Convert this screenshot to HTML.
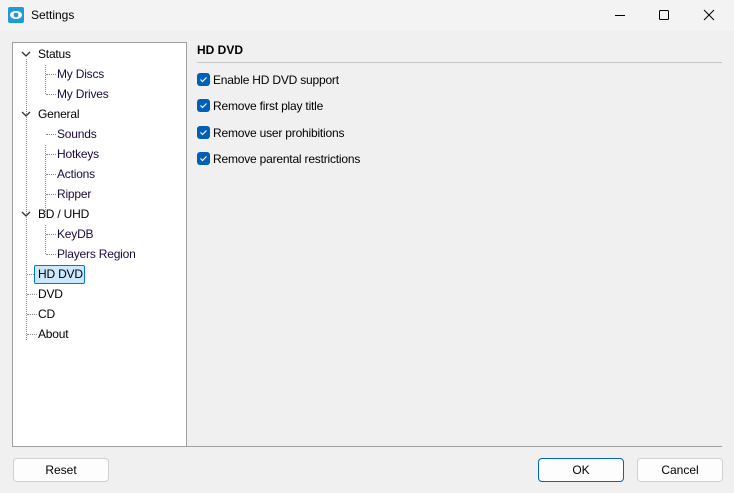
<!DOCTYPE html><html><head><style>
body{margin:0;width:734px;height:493px;background:#f0f0f0;font-family:"Liberation Sans",sans-serif;font-size:12px;color:#000;position:relative;overflow:hidden}
.a{position:absolute}
.title{left:0;top:0;width:734px;height:31px;background:#f3f3f3}
.tree{left:12px;top:42px;width:173px;height:403px;background:#fff;border:1px solid #a0a0a0}
.r{position:absolute;white-space:nowrap;line-height:16px;letter-spacing:-0.2px}
.dv{position:absolute;border-left:1px dotted #888}
.dh{position:absolute;border-top:1px dotted #888}
.btn{position:absolute;height:22px;border:1px solid #d0d0d0;border-radius:4px;background:#fdfdfd;text-align:center;line-height:22px}
.cb{position:absolute;left:197px;width:13px;height:13px;background:#005fb8;border-radius:3px}
.cl{position:absolute;left:213px;line-height:16px;letter-spacing:-0.2px}
</style></head><body>
<div class="a title"></div>
<svg class="a" style="left:8px;top:7px" width="16" height="16"><rect width="16" height="16" rx="2" fill="#1e9bd7"/><ellipse cx="8" cy="8" rx="6" ry="4" fill="#fff"/><circle cx="8" cy="8" r="2.4" fill="#1e9bd7"/></svg>
<div class="a" style="left:31px;top:8px;font-size:12px">Settings</div>
<svg class="a" style="left:600px;top:0" width="134" height="31" fill="none" stroke="#000" stroke-width="1"><path d="M15 15.5h10"/><rect x="59.5" y="10.5" width="9" height="9" rx="1"/><path d="M104 10l10 10M114 10l-10 10"/></svg>
<div class="a tree">
<div class="dv" style="left:13px;top:16px;height:281px"></div>
<div class="dv" style="left:32px;top:22px;height:29px"></div>
<div class="dv" style="left:32px;top:102px;height:69px"></div>
<div class="dv" style="left:32px;top:182px;height:29px"></div>
<div class="dh" style="left:33px;top:31px;width:10px"></div>
<div class="dh" style="left:33px;top:51px;width:10px"></div>
<div class="dh" style="left:33px;top:91px;width:10px"></div>
<div class="dh" style="left:33px;top:111px;width:10px"></div>
<div class="dh" style="left:33px;top:131px;width:10px"></div>
<div class="dh" style="left:33px;top:151px;width:10px"></div>
<div class="dh" style="left:33px;top:191px;width:10px"></div>
<div class="dh" style="left:33px;top:211px;width:10px"></div>
<div class="dh" style="left:14px;top:231px;width:7px"></div>
<div class="dh" style="left:14px;top:251px;width:10px"></div>
<div class="dh" style="left:14px;top:271px;width:10px"></div>
<div class="dh" style="left:14px;top:291px;width:10px"></div>
<svg class="a" style="left:8px;top:7px" width="10" height="8" fill="none" stroke="#333" stroke-width="1.3"><path d="M1 2l4 4 4-4"/></svg>
<svg class="a" style="left:8px;top:67px" width="10" height="8" fill="none" stroke="#333" stroke-width="1.3"><path d="M1 2l4 4 4-4"/></svg>
<svg class="a" style="left:8px;top:167px" width="10" height="8" fill="none" stroke="#333" stroke-width="1.3"><path d="M1 2l4 4 4-4"/></svg>
<div class="r" style="left:25px;top:3px">Status</div>
<div class="r" style="left:44px;top:23px;color:#1a0a3a">My Discs</div>
<div class="r" style="left:44px;top:43px;color:#1a0a3a">My Drives</div>
<div class="r" style="left:25px;top:63px">General</div>
<div class="r" style="left:44px;top:83px;color:#1a0a3a">Sounds</div>
<div class="r" style="left:44px;top:103px;color:#1a0a3a">Hotkeys</div>
<div class="r" style="left:44px;top:123px;color:#1a0a3a">Actions</div>
<div class="r" style="left:44px;top:143px;color:#1a0a3a">Ripper</div>
<div class="r" style="left:25px;top:163px">BD / UHD</div>
<div class="r" style="left:44px;top:183px;color:#1a0a3a">KeyDB</div>
<div class="r" style="left:44px;top:203px;color:#1a0a3a">Players Region</div>
<div class="r" style="left:21px;top:222px;width:51px;height:19px;background:#cce8ff;border:1px solid #0078d7;border-radius:2px;padding-left:3px;box-sizing:border-box;line-height:17px">HD DVD</div>
<div class="r" style="left:25px;top:243px">DVD</div>
<div class="r" style="left:25px;top:263px">CD</div>
<div class="r" style="left:25px;top:283px">About</div>
</div>
<div class="a" style="left:197px;top:42px;font-weight:bold;line-height:16px">HD DVD</div>
<div class="a" style="left:197px;top:62px;width:525px;height:1px;background:#c8c8c8"></div>
<div class="cb" style="top:73px"></div><div class="cl" style="top:72px">Enable HD DVD support</div>
<div class="cb" style="top:99px"></div><div class="cl" style="top:98px">Remove first play title</div>
<div class="cb" style="top:126px"></div><div class="cl" style="top:125px">Remove user prohibitions</div>
<div class="cb" style="top:152px"></div><div class="cl" style="top:151px">Remove parental restrictions</div>
<svg class="a" style="left:197px;top:73px" width="13" height="93" fill="none" stroke="#fff" stroke-width="1.2"><path d="M3.5 6.5l2 2 4-4"/><path d="M3.5 32.5l2 2 4-4"/><path d="M3.5 59.5l2 2 4-4"/><path d="M3.5 85.5l2 2 4-4"/></svg>
<div class="a" style="left:187px;top:446px;width:535px;height:1px;background:#a0a0a0"></div>
<div class="btn" style="left:13px;top:458px;width:94px">Reset</div>
<div class="btn" style="left:538px;top:458px;width:84px;border-color:#0067c0">OK</div>
<div class="btn" style="left:637px;top:458px;width:84px">Cancel</div>
</body></html>
